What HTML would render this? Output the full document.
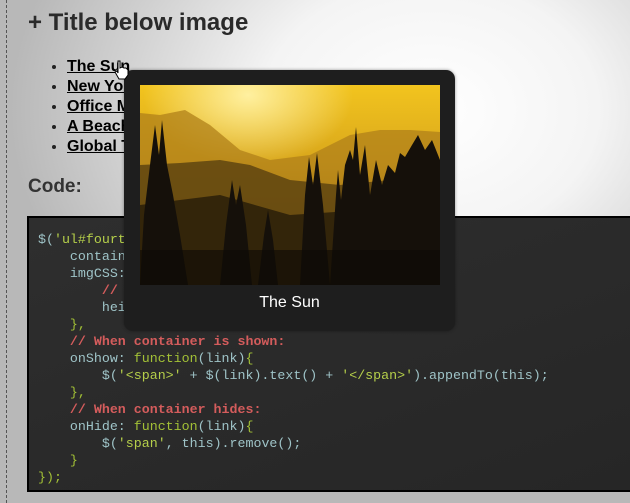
<!DOCTYPE html>
<html><head><meta charset="utf-8"><style>
html,body{margin:0;padding:0}
body{width:630px;height:503px;overflow:hidden;position:relative;font-family:"Liberation Sans",sans-serif;
background:radial-gradient(ellipse 420px 320px at 430px 110px,#fff 0%,#f4f4f4 40%,#d0d0d0 75%,#b8b8b8 100%);}
.dash{position:absolute;left:6px;top:0;height:503px;border-left:1px dashed #555}
h1{position:absolute;left:28px;top:9px;margin:0;font-size:24px;font-weight:bold;color:#2a2a2a}
ul{position:absolute;left:48px;top:57px;margin:0;padding:0 0 0 19px;font-size:16px;font-weight:bold;line-height:20px}
ul li{color:#222}
ul a{color:#000;text-decoration:underline}
h2{position:absolute;left:28px;top:176px;margin:0;font-size:19px;font-weight:bold;color:#333}
.code{position:absolute;left:27px;top:216px;width:620px;height:276px;border:2px solid #000;
background:linear-gradient(160deg,#2e2e2e,#262626);box-sizing:border-box}
pre{position:absolute;left:38px;top:231px;margin:0;font-family:"Liberation Mono",monospace;font-size:13.3px;line-height:17px;color:#9fc4c8}
.c{color:#d45c5c;font-weight:bold}.s{color:#b5cf4a}.p{color:#a2c036}
.tip{position:absolute;left:124px;top:70px;width:331px;height:261px;background:#1e1e1e;border-radius:9px;box-shadow:0 0 3px rgba(0,0,0,.4)}
.tip svg{position:absolute;left:16px;top:15px}
.cap{position:absolute;left:0;width:331px;top:224px;text-align:center;color:#fff;font-size:16px}
.cursor{position:absolute;left:113px;top:60px}
</style></head><body>
<div class="dash"></div>
<h1>+ Title below image</h1>
<ul>
<li><a>The Sun</a></li>
<li><a>New York City</a></li>
<li><a>Office Meeting</a></li>
<li><a>A Beach Sunset</a></li>
<li><a>Global Trade</a></li>
</ul>
<h2>Code:</h2>
<div class="code"></div>
<pre>$(<span class="s">'ul#fourth a'</span>).imgPreview({
    containerID: <span class="s">'imgPreviewWithStyles3'</span>,
    imgCSS: {
        <span class="c">// Limit preview size:</span>
        height: <span class="s">200</span>
    <span class="p">},</span>
    <span class="c">// When container is shown:</span>
    onShow: <span class="p">function</span>(link)<span class="p">{</span>
        $(<span class="s">'&lt;span&gt;'</span> + $(link).text() + <span class="s">'&lt;/span&gt;'</span>).appendTo(this);
    <span class="p">},</span>
    <span class="c">// When container hides:</span>
    onHide: <span class="p">function</span>(link)<span class="p">{</span>
        $(<span class="s">'span'</span>, this).remove();
    <span class="p">}</span>
<span class="p">});</span></pre>
<div class="tip">
<svg width="300" height="200" viewBox="0 0 300 200">
<defs>
<linearGradient id="sky" x1="0" y1="0" x2="0" y2="1"><stop offset="0" stop-color="#f2c41e"/><stop offset="0.4" stop-color="#d8a61c"/><stop offset="1" stop-color="#6a4c10"/></linearGradient>
<radialGradient id="sun" cx="0.36" cy="0.05" r="0.35"><stop offset="0" stop-color="#fff0a0"/><stop offset="1" stop-color="#fff0a0" stop-opacity="0"/></radialGradient>
</defs>
<rect width="300" height="200" fill="url(#sky)"/>
<rect width="300" height="200" fill="url(#sun)"/>
<path d="M0 28 L20 30 L45 25 L70 40 L100 65 L130 75 L170 70 L210 50 L240 45 L270 45 L300 47 L300 200 L0 200Z" fill="#b0801a" opacity=".75"/>
<path d="M0 80 L40 78 L80 75 L110 80 L150 95 L200 100 L250 95 L300 90 L300 200 L0 200Z" fill="#5e4410" opacity=".85"/>
<path d="M0 120 L80 110 L150 130 L300 120 L300 200 L0 200Z" fill="#33250a"/>
<g fill="#15100a">
<path d="M0 200 L4 130 L10 80 L15 40 L19 70 L22 35 L27 80 L33 110 L40 150 L48 200Z"/>
<path d="M80 200 L86 140 L92 95 L96 120 L100 100 L106 140 L112 200Z"/>
<path d="M118 200 L124 150 L128 125 L133 155 L138 200Z"/>
<path d="M160 200 L165 110 L169 72 L173 100 L177 68 L183 120 L190 200Z"/>
<path d="M190 200 L196 110 L198 85 L201 115 L205 80 L210 65 L213 75 L216 42 L220 90 L225 60 L230 110 L236 75 L242 100 L248 80 L255 88 L260 68 L265 72 L272 60 L278 50 L285 65 L292 55 L300 75 L300 200Z"/>
</g>
<rect y="165" width="300" height="35" fill="#0e0a05" opacity=".6"/>
</svg>
<div class="cap">The Sun</div>
</div>
<svg class="cursor" width="18" height="20" viewBox="0 0 18 20"><path d="M5 1 L7 1 L7 8 L9 7 L11 8 L13 8 L15 10 L15 15 L12 19 L6 19 L2 12 L4 11 L5 13Z" fill="#fff" stroke="#000" stroke-width="1"/></svg>
</body></html>
